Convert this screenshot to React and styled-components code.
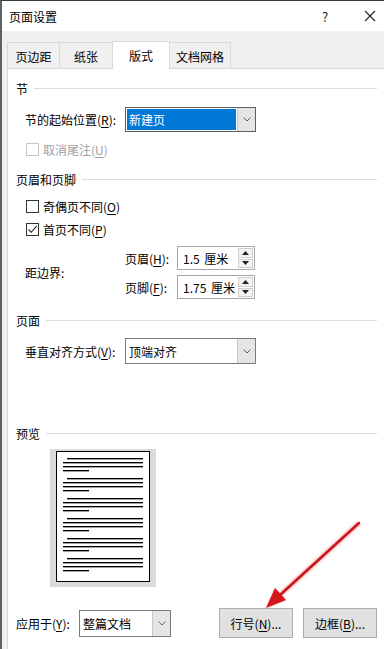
import styled, { createGlobalStyle } from "styled-components";

const GlobalStyle = createGlobalStyle`
  html, body { margin: 0; padding: 0; }
  body {
    font-family: "Noto Sans CJK SC", "Noto Sans", sans-serif;
    font-size: 12px;
    color: #000;
  }
`;

const Window = styled.div`
  position: relative;
  width: 384px;
  height: 649px;
  overflow: hidden;
  box-sizing: border-box;
  background: #f0f0f0;
  border-top: 1px solid #2f3d43;
  border-left: 2px solid #59636a;
  display: flex;
  flex-direction: column;
`;

const TitleBar = styled.div`
  height: 30px;
  flex: none;
  background: #fff;
  display: flex;
  align-items: center;
  padding: 0 0 0 7px;
  font-size: 12px;
`;

const Title = styled.span`
  flex: 1;
`;

const TitleBtn = styled.span`
  width: ${(p) => p.$w}px;
  margin-right: ${(p) => p.$mr || 0}px;
  display: flex;
  justify-content: center;
  align-items: center;
  font-size: 13px;
  color: #222;
`;

const TabStrip = styled.div`
  height: 37px;
  flex: none;
  display: flex;
  align-items: flex-end;
  padding-left: 5px;
`;

const Tab = styled.div`
  box-sizing: border-box;
  width: ${(p) => p.$w}px;
  height: ${(p) => (p.$active ? 28 : 26)}px;
  margin-left: ${(p) => (p.$first ? 0 : -1)}px;
  margin-bottom: ${(p) => (p.$active ? -1 : 0)}px;
  background: ${(p) => (p.$active ? "#fff" : "#f0f0f0")};
  border: 1px solid #d9d9d9;
  border-bottom: none;
  position: relative;
  z-index: ${(p) => (p.$active ? 2 : 1)};
  display: flex;
  align-items: center;
  justify-content: center;
  padding-top: ${(p) => (p.$active ? 0 : 2)}px;
`;

const Panel = styled.div`
  flex: 1;
  margin-left: 5px;
  background: #fff;
  border-top: 1px solid #d9d9d9;
  border-left: 1px solid #d9d9d9;
  padding: 0 7px 0 8px;
  display: flex;
  flex-direction: column;
`;

const GroupHead = styled.div`
  display: flex;
  align-items: center;
  gap: 6px;
  height: 16px;
  margin-top: ${(p) => p.$mt}px;
  &::after {
    content: "";
    flex: 1;
    height: 1px;
    background: #dcdcdc;
  }
`;

const Row = styled.div`
  display: flex;
  align-items: center;
  margin-top: ${(p) => p.$mt}px;
  padding-left: ${(p) => p.$indent ?? 9}px;
`;

const Label = styled.span`
  width: ${(p) => p.$w}px;
  flex: none;
  color: ${(p) => (p.$disabled ? "#a0a0a0" : "#000")};
`;

const Key = styled.span`
  text-decoration: underline;
  text-underline-offset: 2px;
`;

const CheckRow = styled.label`
  display: flex;
  align-items: center;
  gap: 4px;
  height: 16px;
  margin-top: ${(p) => p.$mt}px;
  padding-left: 10px;
  color: ${(p) => (p.$disabled ? "#a0a0a0" : "#000")};
`;

const Box = styled.span`
  box-sizing: border-box;
  width: 13px;
  height: 13px;
  border: 1px solid ${(p) => (p.$disabled ? "#c6c6c6" : "#333")};
  background: #fff;
  display: flex;
  align-items: center;
  justify-content: center;
`;

const Select = styled.div`
  box-sizing: border-box;
  width: ${(p) => p.$w}px;
  height: ${(p) => p.$h}px;
  border: 1px solid ${(p) => (p.$focus ? "#5f5f5f" : "#7a7a7a")};
  background: #fff;
  display: flex;
`;

const SelectValue = styled.div`
  flex: 1;
  margin: 1px;
  padding-left: 2px;
  display: flex;
  align-items: center;
  background: ${(p) => (p.$hl ? "#0078d7" : "transparent")};
  color: ${(p) => (p.$hl ? "#fff" : "#000")};
`;

const DropBtn = styled.div`
  width: 17px;
  flex: none;
  background: #e5e5e5;
  border-left: 1px solid #c8c8c8;
  display: flex;
  align-items: center;
  justify-content: center;
`;

const MarginBlock = styled.div`
  display: flex;
  align-items: center;
  margin-top: ${(p) => p.$mt}px;
  padding-left: 9px;
`;

const SpinRows = styled.div`
  display: flex;
  flex-direction: column;
  gap: 5px;
`;

const Spin = styled.div`
  box-sizing: border-box;
  width: 78px;
  height: 24px;
  border: 1px solid #a8a8a8;
  background: #fff;
  display: flex;
  align-items: center;
  padding: 1px 1px 1px 5px;
`;

const SpinText = styled.span`
  flex: 1;
  word-spacing: 2px;
`;

const SpinBtns = styled.div`
  width: 15px;
  height: 20px;
  display: flex;
  flex-direction: column;
  gap: 1px;
`;

const SpinBtn = styled.div`
  flex: 1;
  box-sizing: border-box;
  border: 1px solid #cfcfcf;
  background: #f3f3f3;
  display: flex;
  align-items: center;
  justify-content: center;
`;

const PreviewFrame = styled.div`
  box-sizing: border-box;
  width: 106px;
  height: 138px;
  margin: 8px 0 0 34px;
  background: #dadada;
  padding: 2px 6px 0 6px;
`;

const Page = styled.div`
  box-sizing: border-box;
  width: 94px;
  height: 131px;
  border: 1.5px solid #000;
  background: #fff;
  padding: 5.5px 6px 0 5.5px;
  display: flex;
  flex-direction: column;
  gap: 7px;
`;

const Para = styled.div`
  display: flex;
  flex-direction: column;
  gap: 3px;
`;

const TextLine = styled.div`
  height: 1px;
  background: #000;
  box-shadow: 0 0.5px 0 #444;
  width: ${(p) => p.$w}px;
  margin-left: ${(p) => p.$ml || 0}px;
`;

const BottomRow = styled.div`
  display: flex;
  align-items: center;
  margin-top: 21px;
  height: 30px;
`;

const Button = styled.button`
  box-sizing: border-box;
  width: 74px;
  height: 30px;
  margin-left: ${(p) => p.$ml}px;
  background: #e1e1e1;
  border: 1px solid #adadad;
  font: inherit;
  color: #000;
  padding: 0;
`;

const Overlay = styled.svg`
  position: absolute;
  left: 0;
  top: 0;
  pointer-events: none;
`;

const Chevron = () => (
  <svg width="8" height="5" viewBox="0 0 8 5">
    <polyline points="0.5,0.5 4,4 7.5,0.5" fill="none" stroke="#606060" strokeWidth="1" />
  </svg>
);

const Tri = ({ up }) => (
  <svg width="7" height="4" viewBox="0 0 7 4">
    <polygon points={up ? "0,4 7,4 3.5,0" : "0,0 7,0 3.5,4"} fill="#222" />
  </svg>
);

const Check = () => (
  <svg width="11" height="11" viewBox="0 0 11 11">
    <polyline points="1.5,5.5 4.2,8.3 9.8,1.8" fill="none" stroke="#222" strokeWidth="1.1" />
  </svg>
);

function Dropdown({ w, h, value, hl, focus }) {
  return (
    <Select $w={w} $h={h} $focus={focus}>
      <SelectValue $hl={hl}>{value}</SelectValue>
      <DropBtn>
        <Chevron />
      </DropBtn>
    </Select>
  );
}

function SpinBox({ value }) {
  return (
    <Spin>
      <SpinText>{value}</SpinText>
      <SpinBtns>
        <SpinBtn>
          <Tri up />
        </SpinBtn>
        <SpinBtn>
          <Tri />
        </SpinBtn>
      </SpinBtns>
    </Spin>
  );
}

const tabs = [
  { name: "页边距", w: 53 },
  { name: "纸张", w: 54 },
  { name: "版式", w: 58, active: true },
  { name: "文档网格", w: 62 },
];

export default function App() {
  const paras = [0, 1, 2, 3, 4, 5];
  return (
    <>
      <GlobalStyle />
      <Window>
        <TitleBar>
          <Title>页面设置</Title>
          <TitleBtn $w={20} $mr={21}>?</TitleBtn>
          <TitleBtn $w={28}>
            <svg width="12" height="12" viewBox="0 0 12 12">
              <path d="M1 1L11 11M11 1L1 11" stroke="#222" strokeWidth="1.1" />
            </svg>
          </TitleBtn>
        </TitleBar>

        <TabStrip>
          {tabs.map((t, i) => (
            <Tab key={t.name} $w={t.w} $active={t.active} $first={i === 0}>
              {t.name}
            </Tab>
          ))}
        </TabStrip>

        <Panel>
          <GroupHead $mt={11}>节</GroupHead>
          <Row $mt={11}>
            <Label $w={100}>
              节的起始位置(<Key>R</Key>):
            </Label>
            <Dropdown w={131} h={25} value="新建页" hl focus />
          </Row>
          <CheckRow $mt={9} $disabled>
            <Box $disabled />
            <span>
              取消尾注(<Key>U</Key>)
            </span>
          </CheckRow>

          <GroupHead $mt={14}>页眉和页脚</GroupHead>
          <CheckRow $mt={11}>
            <Box />
            <span>
              奇偶页不同(<Key>O</Key>)
            </span>
          </CheckRow>
          <CheckRow $mt={7}>
            <Box>
              <Check />
            </Box>
            <span>
              首页不同(<Key>P</Key>)
            </span>
          </CheckRow>
          <MarginBlock $mt={9}>
            <Label $w={100}>距边界:</Label>
            <SpinRows>
              <Row $mt={0} $indent={0}>
                <Label $w={52}>
                  页眉(<Key>H</Key>):
                </Label>
                <SpinBox value="1.5 厘米" />
              </Row>
              <Row $mt={0} $indent={0}>
                <Label $w={52}>
                  页脚(<Key>F</Key>):
                </Label>
                <SpinBox value="1.75 厘米" />
              </Row>
            </SpinRows>
          </MarginBlock>

          <GroupHead $mt={13}>页面</GroupHead>
          <Row $mt={10}>
            <Label $w={100}>
              垂直对齐方式(<Key>V</Key>):
            </Label>
            <Dropdown w={131} h={26} value="顶端对齐" />
          </Row>

          <GroupHead $mt={61}>预览</GroupHead>
          <PreviewFrame>
            <Page>
              {paras.map((p) => (
                <Para key={p}>
                  <TextLine $w={76} $ml={4} />
                  <TextLine $w={80} />
                  <TextLine $w={80} />
                  <TextLine $w={26} />
                </Para>
              ))}
            </Page>
          </PreviewFrame>

          <BottomRow>
            <Label $w={63}>
              应用于(<Key>Y</Key>):
            </Label>
            <Dropdown w={92} h={27} value="整篇文档" />
            <Button $ml={48}>
              行号(<Key>N</Key>)...
            </Button>
            <Button $ml={10}>
              边框(<Key>B</Key>)...
            </Button>
          </BottomRow>
        </Panel>

        <Overlay width="384" height="649" viewBox="0 0 384 649">
          <defs>
            <filter id="glow" x="-20%" y="-20%" width="140%" height="140%">
              <feGaussianBlur stdDeviation="1.2" />
            </filter>
          </defs>
          <g filter="url(#glow)" opacity="0.45">
            <line x1="357" y1="522" x2="278" y2="594" stroke="#ff6060" strokeWidth="5" />
            <polygon points="264,607 284,599 273,587" fill="#ff6060" />
          </g>
          <line x1="357" y1="522" x2="278" y2="594" stroke="#c8161d" strokeWidth="2.5" strokeLinecap="round" />
          <polygon points="264,607 284,599 273,587" fill="#d4161d" />
        </Overlay>
      </Window>
    </>
  );
}
